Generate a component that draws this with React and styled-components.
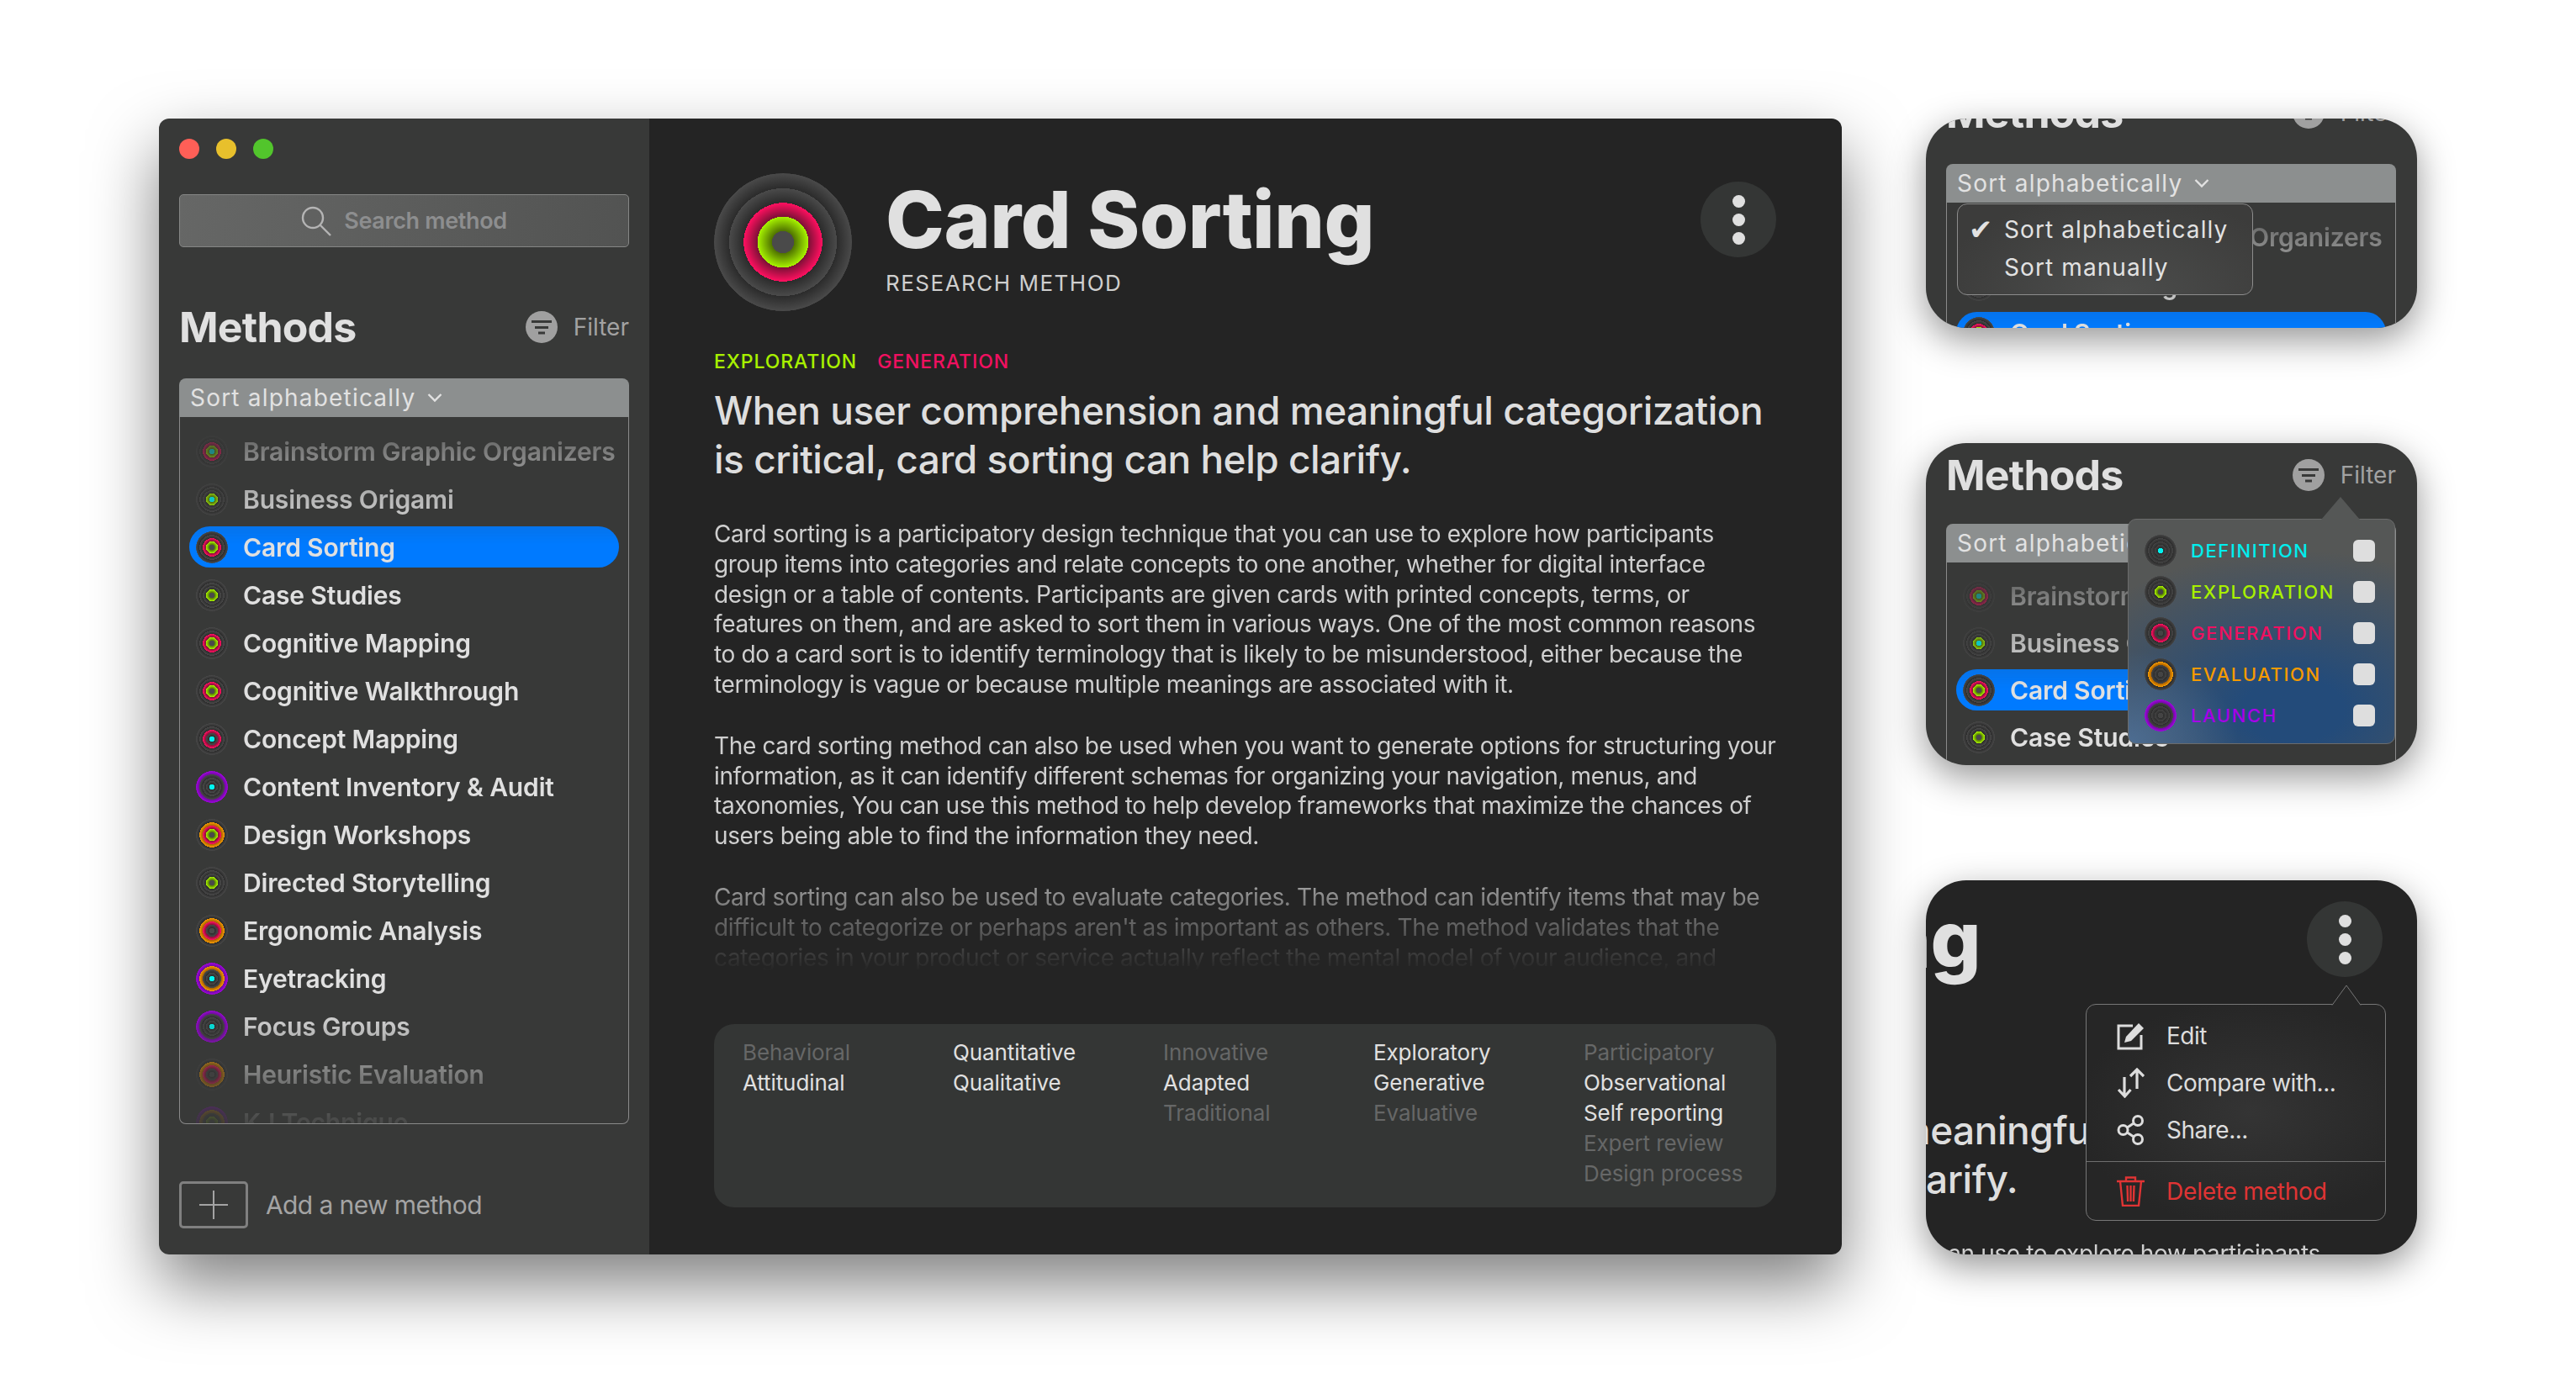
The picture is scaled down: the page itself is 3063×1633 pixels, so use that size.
import React from "react";
import styled, { createGlobalStyle } from "styled-components";

const GlobalStyle = createGlobalStyle`
    html, body {
        margin: 0;
        background: #ffffff;
        width: 3063px;
        height: 1633px;
        overflow: hidden;
        font-family: "Inter", "Liberation Sans", sans-serif;
        color: #dddddd;
    }
    * {
        box-sizing: border-box;
    }
`;

const Page = styled.div`
    display: flex;
    gap: 100px;
    padding: 141px 0 0 189px;
`;

const Window = styled.div`
    display: flex;
    flex: none;
    width: 2001px;
    height: 1351px;
    border-radius: 12px;
    overflow: hidden;
    box-shadow: 0 36px 80px rgba(0, 0, 0, 0.5);
`;

const Sidebar = styled.div`
    flex: none;
    width: 583px;
    padding: 24px 24px 0;
    background: #383938;
`;

const TrafficLights = styled.div`
    display: flex;
    gap: 20px;
`;

const Light = styled.div`
    width: 24px;
    height: 24px;
    border-radius: 50%;
    background: ${(p) => p.$color};
`;

const SearchBox = styled.div`
    display: flex;
    align-items: center;
    justify-content: center;
    gap: 15px;
    height: 63px;
    margin: 42px 0 76px;
    border: 1px solid #858685;
    border-radius: 5px;
    background: linear-gradient(100deg, #666766, #525352);
    color: #8d8e8f;
    font-size: 27px;
    font-weight: 600;
    letter-spacing: -0.35px;
`;

const MethodsHeader = styled.div`
    display: flex;
    align-items: center;
    justify-content: space-between;
    height: 38px;
`;

const MethodsTitle = styled.div`
    font-size: 50px;
    font-weight: 700;
    line-height: 38px;
    letter-spacing: -0.8px;
    color: #e0e0e0;
`;

const FilterButton = styled.div`
    display: flex;
    align-items: center;
    gap: 19px;
    font-size: 28px;
    color: #a2a2a2;
`;

const SortBar = styled.div`
    display: flex;
    align-items: center;
    gap: 14px;
    height: 46px;
    margin-top: ${(p) => (p.$compact ? 39 : 42)}px;
    padding-left: 13px;
    border-radius: 8px 8px 0 0;
    background: #8c8f8f;
    font-size: 28px;
    letter-spacing: 1.2px;
    color: #e2e2e2;
`;

const ListBox = styled.div`
    height: 841px;
    padding: ${(p) => (p.$compact ? 15 : 16)}px 11px 0;
    border: 1px solid #8a8a8a;
    border-top: 0;
    border-radius: 0 0 8px 8px;
    overflow: hidden;
`;

const ListFade = styled.div`
    display: flex;
    flex-direction: column;
    gap: ${(p) => (p.$compact ? 7 : 8)}px;
    height: 825px;
    overflow: hidden;
    -webkit-mask-image: linear-gradient(
        #00000033 0,
        #00000066 24px,
        #000000c0 81px,
        #000000 135px,
        #000000 665px,
        #000000d9 707px,
        #0000006b 764px,
        #0000001a 821px
    );
    mask-image: linear-gradient(
        #00000033 0,
        #00000066 24px,
        #000000c0 81px,
        #000000 135px,
        #000000 665px,
        #000000d9 707px,
        #0000006b 764px,
        #0000001a 821px
    );
`;

const MethodRow = styled.div`
    display: flex;
    flex: none;
    align-items: center;
    gap: 18px;
    height: 49px;
    padding-left: 8px;
    border-radius: 25px;
    background: ${(p) => (p.$selected ? "#007aff" : "transparent")};
    font-size: 30px;
    font-weight: 600;
    letter-spacing: -0.15px;
    color: #e0e0e0;
    white-space: nowrap;
`;

const Ring = styled.div`
    flex: none;
    width: ${(p) => p.$size}px;
    height: ${(p) => p.$size}px;
    border-radius: 50%;
    background: ${(p) => p.$paint};
`;

const AddRow = styled.div`
    display: flex;
    align-items: center;
    gap: 21px;
    margin-top: 68px;
    font-size: 30px;
    letter-spacing: -0.6px;
    color: #a4a4a4;
`;

const AddBox = styled.div`
    display: flex;
    align-items: center;
    justify-content: center;
    width: 82px;
    height: 56px;
    border: 3px solid #808080;
    border-radius: 5px;
`;

const Main = styled.div`
    flex: 1;
    min-width: 0;
    padding: 65px 78px 0 77px;
    background: #242424;
`;

const ArticleHead = styled.div`
    position: relative;
    display: flex;
    gap: 40px;
    height: 164px;
`;

const TitleBlock = styled.div`
    display: flex;
    flex-direction: column;
`;

const Title = styled.div`
    font-size: 94px;
    font-weight: 800;
    line-height: 110px;
    letter-spacing: -0.45px;
    color: #e0e0e0;
    white-space: nowrap;
`;

const Subtitle = styled.div`
    margin-top: 6px;
    font-size: 26px;
    line-height: 30px;
    letter-spacing: 1.5px;
    color: #cfcfcf;
`;

const MoreButton = styled.div`
    display: flex;
    flex-direction: column;
    align-items: center;
    justify-content: center;
    gap: 7px;
    width: 90px;
    height: 90px;
    margin: 10px 0 0 auto;
    border-radius: 50%;
    background: #343635;
`;

const Dot = styled.div`
    width: 15px;
    height: 15px;
    border-radius: 50%;
    background: #dfdfdf;
`;

const Tags = styled.div`
    display: flex;
    gap: 24px;
    margin-top: 45px;
    line-height: 30px;
`;

const Tag = styled.div`
    font-size: 23px;
    font-weight: 500;
    letter-spacing: 0.9px;
    color: ${(p) => p.$color};
`;

const Headline = styled.div`
    margin-top: 14px;
    font-size: 46px;
    font-weight: 500;
    line-height: 58px;
    letter-spacing: -0.5px;
    color: #dedede;
    white-space: nowrap;
`;

const BodyFade = styled.div`
    height: 537px;
    margin-top: 43px;
    overflow: hidden;
    font-size: 28px;
    line-height: 35.8px;
    letter-spacing: -0.36px;
    color: #cfcfcf;
    white-space: nowrap;
    -webkit-mask-image: linear-gradient(#000 0, #000 405px, #00000099 448px, #00000059 484px, #0000001f 519px, #0000 537px);
    mask-image: linear-gradient(#000 0, #000 405px, #00000099 448px, #00000059 484px, #0000001f 519px, #0000 537px);
`;

const Paragraph = styled.div`
    margin-bottom: 37px;
`;

const Line = styled.div``;

const FacetPanel = styled.div`
    display: grid;
    grid-template-columns: repeat(5, 250px);
    height: 218px;
    margin-top: 63px;
    padding: 16px 0 0 34px;
    border-radius: 24px;
    background: #343635;
    font-size: 26px;
    line-height: 36px;
    letter-spacing: -0.1px;
`;

const Facet = styled.div`
    color: ${(p) => (p.$on ? "#e0e0e0" : "#666767")};
`;

const SideColumn = styled.div`
    display: flex;
    flex: none;
    flex-direction: column;
    gap: 137px;
    width: 584px;
`;

const MiniCard = styled.div`
    position: relative;
    height: ${(p) => p.$height}px;
    padding: ${(p) => p.$pad};
    border-radius: 48px;
    overflow: hidden;
    background: ${(p) => p.$bg};
    box-shadow: 0 14px 44px rgba(0, 0, 0, 0.42);
`;

const MiniPanel = styled.div`
    width: 535px;
    margin-top: ${(p) => p.$top}px;
`;

const SortMenu = styled.div`
    position: absolute;
    left: 37px;
    top: 101px;
    width: 352px;
    height: 109px;
    padding: 8px 0 0 13px;
    border: 1px solid #8c8c8c;
    border-radius: 12px;
    background: radial-gradient(ellipse at 55% 100%, #4c4d4c, #3c3c3b 80%);
    font-size: 28px;
    line-height: 45px;
    letter-spacing: 1.1px;
    color: #e2e2e2;
`;

const SortOption = styled.div`
    display: flex;
    align-items: center;
    gap: 19px;
`;

const CheckSlot = styled.div`
    width: 23px;
    font-family: "DejaVu Sans", sans-serif;
    font-size: 34px;
    letter-spacing: 0;
`;

const FilterMenu = styled.div`
    position: absolute;
    left: 240px;
    top: 90px;
    width: 318px;
    height: 268px;
    padding: 12px 23px 0 19px;
    border: 1px solid #6b6c6c;
    border-radius: 10px;
    background:
        radial-gradient(ellipse 130px 110px at 0% 100%, #4d6d92, transparent),
        radial-gradient(ellipse 300px 190px at 62% 85%, #234b7a 20%, rgba(35, 75, 122, 0) 100%),
        #555756;
`;

const FilterArrow = styled.div`
    position: absolute;
    left: 229px;
    top: -27px;
    width: 46px;
    height: 27px;
    background: #555756;
    clip-path: polygon(50% 0, 100% 100%, 0 100%);
`;

const FilterRow = styled.div`
    display: flex;
    align-items: center;
    gap: 17px;
    height: 49px;
    font-size: 22px;
    font-weight: 500;
    letter-spacing: 1.6px;
    color: ${(p) => p.$color};
`;

const CheckBox = styled.div`
    flex: none;
    width: 26px;
    height: 26px;
    margin-left: auto;
    border-radius: 6px;
    background: #dedede;
`;

const ArticleCrop = styled.div`
    width: 1263px;
    margin: 15px 0 0 -720px;
`;

const ActionMenu = styled.div`
    position: absolute;
    left: 190px;
    top: 147px;
    width: 357px;
    height: 258px;
    border: 1px solid #777777;
    border-radius: 12px;
    background: radial-gradient(ellipse at 55% 50%, #343434, #262626 75%);
`;

const ActionArrow = styled.svg`
    position: absolute;
    left: 291px;
    top: -24px;
`;

const ActionRow = styled.div`
    display: flex;
    align-items: center;
    gap: 26px;
    height: 56px;
    padding-left: 36px;
    font-size: 28px;
    letter-spacing: ${(p) => (p.$color ? "-0.2px" : "-0.5px")};
    color: ${(p) => p.$color || "#dddddd"};
`;

const ActionList = styled.div`
    height: 187px;
    padding-top: 9px;
    border-bottom: 1px solid #6e6e6e;
`;

const DeleteSlot = styled.div`
    padding-top: 7px;
`;

const STAGE_COLORS = {
    launch: ["#6a0f96", "#a600e8"],
    evaluation: ["#a35c00", "#f59a00"],
    generation: ["#7d1036", "#ff1060"],
    exploration: ["#4f7200", "#a8f400"],
};

const BANDS = [
    ["launch", 78, 100],
    ["evaluation", 57, 78],
    ["generation", 37, 57],
    ["exploration", 16, 37],
];

// concentric rings, one band per research stage
const ringPaint = (stages, track) => {
    const stops = [];
    const coreOn = stages.includes("definition");
    stops.push(`${coreOn ? "#00f4f0" : track[1]} 0`, `${coreOn ? "#00f4f0" : track[1]} 16%`);
    [...BANDS].reverse().forEach(([name, from, to]) => {
        const colors = stages.includes(name) ? STAGE_COLORS[name] : track;
        stops.push(`${colors[0]} ${from}%`, `${colors[1]} ${to}%`);
    });
    return `radial-gradient(circle closest-side, ${stops.join(", ")}, transparent 100%)`;
};

const StageRing = ({ stages, size = 38, track = ["#2b2b2b", "#4a4a4a"] }) => (
    <Ring $size={size} $paint={ringPaint(stages, track)} />
);

const methods = [
    { name: "Brainstorm Graphic Organizers", stages: ["generation", "exploration", "definition"] },
    { name: "Business Origami", stages: ["exploration", "definition"] },
    { name: "Card Sorting", stages: ["generation", "exploration"], selected: true },
    { name: "Case Studies", stages: ["exploration"] },
    { name: "Cognitive Mapping", stages: ["generation", "exploration"] },
    { name: "Cognitive Walkthrough", stages: ["generation", "exploration"] },
    { name: "Concept Mapping", stages: ["generation", "definition"] },
    { name: "Content Inventory & Audit", stages: ["launch", "definition"] },
    { name: "Design Workshops", stages: ["evaluation", "generation", "exploration"] },
    { name: "Directed Storytelling", stages: ["exploration"] },
    { name: "Ergonomic Analysis", stages: ["evaluation", "generation"] },
    { name: "Eyetracking", stages: ["launch", "evaluation", "definition"] },
    { name: "Focus Groups", stages: ["launch", "definition"] },
    { name: "Heuristic Evaluation", stages: ["evaluation", "generation"] },
    { name: "KJ Technique", stages: ["launch", "evaluation", "exploration"] },
];

const paragraphs = [
    [
        "Card sorting is a participatory design technique that you can use to explore how participants",
        "group items into categories and relate concepts to one another, whether for digital interface",
        "design or a table of contents. Participants are given cards with printed concepts, terms, or",
        "features on them, and are asked to sort them in various ways. One of the most common reasons",
        "to do a card sort is to identify terminology that is likely to be misunderstood, either because the",
        "terminology is vague or because multiple meanings are associated with it.",
    ],
    [
        "The card sorting method can also be used when you want to generate options for structuring your",
        "information, as it can identify different schemas for organizing your navigation, menus, and",
        "taxonomies, You can use this method to help develop frameworks that maximize the chances of",
        "users being able to find the information they need.",
    ],
    [
        "Card sorting can also be used to evaluate categories. The method can identify items that may be",
        "difficult to categorize or perhaps aren't as important as others. The method validates that the",
        "categories in your product or service actually reflect the mental model of your audience, and",
    ],
];

const facets = [
    [["Behavioral"], ["Attitudinal", true]],
    [["Quantitative", true], ["Qualitative", true]],
    [["Innovative"], ["Adapted", true], ["Traditional"]],
    [["Exploratory", true], ["Generative", true], ["Evaluative"]],
    [["Participatory"], ["Observational", true], ["Self reporting", true], ["Expert review"], ["Design process"]],
];

const filters = [
    { label: "DEFINITION", color: "#00eeee", stages: ["definition"] },
    { label: "EXPLORATION", color: "#a8f000", stages: ["exploration"] },
    { label: "GENERATION", color: "#f01060", stages: ["generation"] },
    { label: "EVALUATION", color: "#f59a00", stages: ["evaluation"] },
    { label: "LAUNCH", color: "#a600e8", stages: ["launch"] },
];

const SearchIcon = () => (
    <svg width="36" height="36" viewBox="0 0 36 36" fill="none" stroke="#b4b4b4" strokeWidth="2.4">
        <circle cx="14" cy="14" r="12" />
        <path d="M22.5 22.5 L35 35" />
    </svg>
);

const FilterIcon = () => (
    <svg width="38" height="38" viewBox="0 0 38 38">
        <circle cx="19" cy="19" r="19" fill="#a0a0a0" />
        <path d="M7 12.5h24M11 19.5h16M15 26h8" stroke="#383938" strokeWidth="3" />
    </svg>
);

const Chevron = () => (
    <svg width="18" height="12" viewBox="0 0 18 12" fill="none" stroke="#e2e2e2" strokeWidth="2.4">
        <path d="M1.5 2 L9 9.5 L16.5 2" />
    </svg>
);

const PlusIcon = () => (
    <svg width="34" height="34" viewBox="0 0 34 34" stroke="#a4a4a4" strokeWidth="2">
        <path d="M0 17h34M17 0v34" />
    </svg>
);

const EditIcon = () => (
    <svg width="33" height="33" viewBox="0 0 33 33" fill="none">
        <path d="M19 4H2v27h27V15" stroke="#dddddd" strokeWidth="3" />
        <path d="M9 24l2-7L26 1l6 6-15 15z" fill="#dddddd" />
    </svg>
);

const CompareIcon = () => (
    <svg width="33" height="36" viewBox="0 0 33 36" fill="none" stroke="#dddddd" strokeWidth="3.2">
        <path d="M9 11v23M2 26l7.5 8 7-8M24 25V2M16 10l8-8 8 8" />
    </svg>
);

const ShareIcon = () => (
    <svg width="33" height="36" viewBox="0 0 33 36" fill="none" stroke="#dddddd" strokeWidth="3">
        <circle cx="7.5" cy="18" r="5.5" />
        <circle cx="25" cy="7" r="5.5" />
        <circle cx="25" cy="29" r="5.5" />
        <path d="M12.5 15L20 10M12.5 21L20 26" />
    </svg>
);

const TrashIcon = () => (
    <svg width="33" height="36" viewBox="0 0 33 36" fill="none" stroke="#e03434" strokeWidth="2.4">
        <path d="M0 6h33M11 6V1.5h11V6M4 6l3 29h19l3-29M12.5 11l.6 19M16.5 11v19M20.5 11l-.6 19" />
    </svg>
);

const MethodsSection = ({ compact }) => (
    <>
        <MethodsHeader>
            <MethodsTitle>Methods</MethodsTitle>
            <FilterButton>
                <FilterIcon />
                Filter
            </FilterButton>
        </MethodsHeader>
        <SortBar $compact={compact}>
            Sort alphabetically
            <Chevron />
        </SortBar>
        <ListBox $compact={compact}>
            <ListFade $compact={compact}>
                {methods.map((method) => (
                    <MethodRow key={method.name} $selected={method.selected}>
                        <StageRing stages={method.stages} />
                        {method.name}
                    </MethodRow>
                ))}
            </ListFade>
        </ListBox>
    </>
);

const ArticleIntro = () => (
    <>
        <ArticleHead>
            <StageRing stages={["generation", "exploration"]} size={164} />
            <TitleBlock>
                <Title>Card Sorting</Title>
                <Subtitle>RESEARCH METHOD</Subtitle>
            </TitleBlock>
            <MoreButton>
                <Dot />
                <Dot />
                <Dot />
            </MoreButton>
        </ArticleHead>
        <Tags>
            <Tag $color="#a8f000">EXPLORATION</Tag>
            <Tag $color="#f01060">GENERATION</Tag>
        </Tags>
        <Headline>
            <Line>When user comprehension and meaningful categorization</Line>
            <Line>is critical, card sorting can help clarify.</Line>
        </Headline>
    </>
);

const ArticleBody = () => (
    <BodyFade>
        {paragraphs.map((lines, index) => (
            <Paragraph key={index}>
                {lines.map((line) => (
                    <Line key={line}>{line}</Line>
                ))}
            </Paragraph>
        ))}
    </BodyFade>
);

function App() {
    return (
        <>
            <GlobalStyle />
            <Page>
                <Window>
                    <Sidebar>
                        <TrafficLights>
                            <Light $color="#ff5f57" />
                            <Light $color="#e8c02c" />
                            <Light $color="#52c52c" />
                        </TrafficLights>
                        <SearchBox>
                            <SearchIcon />
                            Search method
                        </SearchBox>
                        <MethodsSection />
                        <AddRow>
                            <AddBox>
                                <PlusIcon />
                            </AddBox>
                            Add a new method
                        </AddRow>
                    </Sidebar>
                    <Main>
                        <ArticleIntro />
                        <ArticleBody />
                        <FacetPanel>
                            {facets.map((column, index) => (
                                <div key={index}>
                                    {column.map(([label, on]) => (
                                        <Facet key={label} $on={on}>{label}</Facet>
                                    ))}
                                </div>
                            ))}
                        </FacetPanel>
                    </Main>
                </Window>
                <SideColumn>
                    <MiniCard $height={249} $pad="0 0 0 24px" $bg="#383938">
                        <MiniPanel $top={-26}>
                            <MethodsSection />
                        </MiniPanel>
                        <SortMenu>
                            <SortOption>
                                <CheckSlot>✔</CheckSlot>
                                Sort alphabetically
                            </SortOption>
                            <SortOption>
                                <CheckSlot />
                                Sort manually
                            </SortOption>
                        </SortMenu>
                    </MiniCard>
                    <MiniCard $height={383} $pad="0 0 0 24px" $bg="#383938">
                        <MiniPanel $top={19}>
                            <MethodsSection compact />
                        </MiniPanel>
                        <FilterMenu>
                            <FilterArrow />
                            {filters.map((filter) => (
                                <FilterRow key={filter.label} $color={filter.color}>
                                    <StageRing stages={filter.stages} track={["#2c2c2c", "#444444"]} />
                                    {filter.label}
                                    <CheckBox />
                                </FilterRow>
                            ))}
                        </FilterMenu>
                    </MiniCard>
                    <MiniCard $height={445} $pad="0" $bg="#242424">
                        <ArticleCrop>
                            <ArticleIntro />
                            <ArticleBody />
                        </ArticleCrop>
                        <ActionMenu>
                            <ActionArrow width="36" height="25" viewBox="0 0 36 25" fill="#262626" stroke="#777777">
                                <path d="M1 24.5 L18 1 L35 24.5" />
                            </ActionArrow>
                            <ActionList>
                                <ActionRow>
                                    <EditIcon />
                                    Edit
                                </ActionRow>
                                <ActionRow>
                                    <CompareIcon />
                                    Compare with...
                                </ActionRow>
                                <ActionRow>
                                    <ShareIcon />
                                    Share...
                                </ActionRow>
                            </ActionList>
                            <DeleteSlot>
                                <ActionRow $color="#e03434">
                                    <TrashIcon />
                                    Delete method
                                </ActionRow>
                            </DeleteSlot>
                        </ActionMenu>
                    </MiniCard>
                </SideColumn>
            </Page>
        </>
    );
}

export default App;
